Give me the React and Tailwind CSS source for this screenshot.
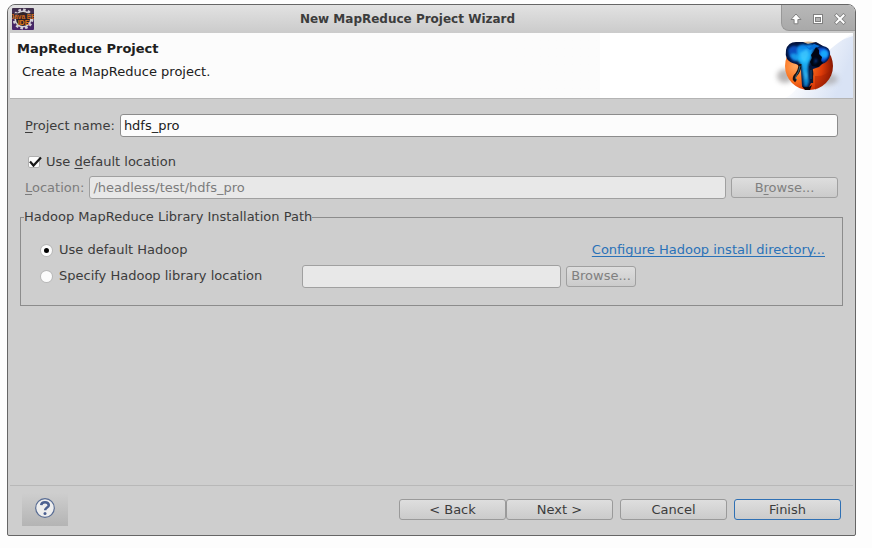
import { useState } from "react";

const buttonBase =
  "h-[21px] shrink-0 rounded-[3px] border bg-linear-to-b from-[#dedede] to-[#cbcbcb] text-center leading-[18px]";
const fieldBase = "h-[23px] min-w-0 rounded-[3px] border px-[3px] leading-5 outline-none";
const disabledField = "border-[#a0a0a0] bg-[#e8e8e8] text-[#7c7c7c]";
const disabledButton = "border-[#a0a0a0] from-[#cccccc] to-[#bcbcbc] text-[#808080]";
const radioBase =
  "size-[11px] shrink-0 appearance-none rounded-full bg-[#fcfcfc] shadow-[0_0_0_1px_#b8b8b8] checked:border-[3px] checked:border-[#fcfcfc] checked:bg-black";

function JavaEEIcon() {
  return (
    <svg className="size-[22px]" viewBox="0 0 22 22" aria-hidden="true">
      <defs>
        <linearGradient id="tile" x1="0" y1="0" x2="0" y2="1">
          <stop offset="0" stopColor="#40304c" />
          <stop offset="1" stopColor="#48246c" />
        </linearGradient>
      </defs>
      <rect width="22" height="22" rx="1" fill="url(#tile)" />
      <circle cx="11" cy="11" r="9.2" fill="none" stroke="#d4d0d8" strokeWidth="2.4" strokeDasharray="2.6 2.2" />
      <circle cx="11" cy="11" r="7.8" fill="#2a2028" stroke="#d4d0d8" strokeWidth="1.6" />
      <rect x="0" y="5" width="22" height="6" fill="#33242c" opacity="0.75" />
      <text x="11" y="10.5" textAnchor="middle" fontSize="6.5" fontWeight="bold" fill="#d06818" fontFamily="Liberation Sans, sans-serif">
        Java EE
      </text>
      <text x="11.5" y="16.5" textAnchor="middle" fontSize="7" fontWeight="bold" fill="#e07818" fontFamily="Liberation Sans, sans-serif">
        IDE
      </text>
    </svg>
  );
}

function ElephantBanner() {
  return (
    <svg className="h-[65px] w-[90px] shrink-0" viewBox="0 0 90 65" aria-hidden="true">
      <defs>
        <linearGradient id="sky" x1="0.2" y1="0" x2="1" y2="0.3">
          <stop offset="0.1" stopColor="#ffffff" />
          <stop offset="1" stopColor="#d9e3f5" />
        </linearGradient>
        <radialGradient id="globe" cx="0.22" cy="0.5" r="0.8">
          <stop offset="0" stopColor="#ffa860" />
          <stop offset="0.35" stopColor="#fb7420" />
          <stop offset="0.7" stopColor="#dc3a08" />
          <stop offset="1" stopColor="#801400" />
        </radialGradient>
        <linearGradient id="trunk" x1="0" y1="0" x2="0" y2="1">
          <stop offset="0" stopColor="#0c80e8" />
          <stop offset="0.35" stopColor="#20b8fc" />
          <stop offset="1" stopColor="#0c78c0" />
        </linearGradient>
        <filter id="soft" x="-50%" y="-50%" width="200%" height="200%">
          <feGaussianBlur stdDeviation="2.4" />
        </filter>
        <filter id="blend" x="-20%" y="-20%" width="140%" height="140%">
          <feGaussianBlur stdDeviation="0.8" />
        </filter>
      </defs>
      <path d="M90 0V65H22C40 58 43 28 90 0Z" fill="url(#sky)" />
      <path d="M56 22Q72 8 90 3V0H0V22Z" fill="#ffffff" opacity="0.7" />
      <ellipse cx="22" cy="43" rx="8" ry="7" fill="#9d9a9a" opacity="0.7" filter="url(#soft)" />
      <ellipse cx="64" cy="46" rx="11" ry="6" fill="#9d9a9a" opacity="0.6" filter="url(#soft)" />
      <circle cx="46" cy="33" r="24" fill="url(#globe)" />
      <path d="M52 57Q65 51 69 36Q62 44 52 43Z" fill="#a02004" opacity="0.4" />
      <path d="M36 10Q48 6 58 12L51 16H40Z" fill="#d8b48c" />
      <path
        d="M23 17Q25 9 33 9H40L45 11L53 9L60 13Q67 14 67 21Q66 29 59 31L56 34L50 36L48 40L48 50L45 56Q41 57 39 53L38 37Q36 32 33 31Q27 30 24 26Q22 22 23 17Z"
        fill="#031440"
      />
      <path d="M25 17Q28 12 33 13L37 17L35 26L31 28Q26 26 25 17Z" fill="#0850c0" filter="url(#blend)" />
      <path d="M27 22Q31 18 36 23L34 28Q29 27 27 22Z" fill="#1498e8" filter="url(#blend)" />
      <path d="M55 15Q63 13 66 20Q65 27 60 29L56 26Z" fill="#0858e0" filter="url(#blend)" />
      <circle cx="61" cy="21" r="4" fill="#14a8fc" filter="url(#blend)" />
      <path
        d="M34 14Q38 10 43 12Q49 10 53 13L50 18L48 26Q45 30 45 36L46 49L44 54L41 53L39 37Q39 31 34 27Z"
        fill="url(#trunk)"
        filter="url(#blend)"
      />
      <path d="M37 20L44 16L46 21L42 30L38 26Z" fill="#48d0ff" opacity="0.65" filter="url(#blend)" />
      <path d="M41 36L44 42L43 49Z" fill="#5cd8ff" opacity="0.65" filter="url(#blend)" />
      <path d="M40 11L46 15L51 11L57 13L53 15L47 17Z" fill="#0870d8" />
      <path d="M53 14L56 17L56 21L59 24L58 28L60 30L55 34L49 33L47 29L49 25L48 22L51 18Z" fill="#010512" />
      <path d="M52 25L55 28L51 31Z" fill="#0848b0" opacity="0.7" filter="url(#blend)" />
      <path d="M37 31Q37 38 32 43Q30 46 33 48" fill="none" stroke="#1c1010" strokeWidth="3" />
      <path d="M37 33Q36 39 33 43Q31 46 34 47" fill="none" stroke="#2c6880" strokeWidth="1" />
      <path d="M47 33Q50 38 49 43V50" fill="none" stroke="#0a1830" strokeWidth="2.2" />
      <path d="M48 37V46" fill="none" stroke="#205880" strokeWidth="0.8" />
      <path d="M39 53Q44 56 49 52L47 57H42Z" fill="#120404" />
    </svg>
  );
}

function WindowControls() {
  const control = "flex size-[22px] items-center justify-center";
  return (
    <div className="flex h-[26px] w-[74px] items-center self-start rounded-bl-lg border-b border-l border-[#989898] bg-linear-to-b from-[#b8b8b8] to-[#a9a9a9] pt-[2px] pl-[3px]">
      <button type="button" aria-label="Roll up" className={control}>
        <svg className="size-[12px]" viewBox="0 0 12 12">
          <path d="M6 1L11 6.5H7.9V10.8H4.1V6.5H1Z" fill="#ffffff" stroke="#808080" />
        </svg>
      </button>
      <button type="button" aria-label="Maximize" className={control}>
        <svg className="size-[12px]" viewBox="0 0 12 12">
          <rect x="1.5" y="1.5" width="9" height="9" fill="#ffffff" stroke="#808080" />
          <rect x="3.5" y="4.5" width="5" height="4" fill="#b2b2b2" stroke="#808080" />
        </svg>
      </button>
      <button type="button" aria-label="Close" className={control}>
        <svg className="size-[12px]" viewBox="0 0 12 12" strokeLinecap="square">
          <path d="M2.5 2.5L9.5 9.5M9.5 2.5L2.5 9.5" stroke="#808080" strokeWidth="3.6" />
          <path d="M2.5 2.5L9.5 9.5M9.5 2.5L2.5 9.5" stroke="#ffffff" strokeWidth="2" />
        </svg>
      </button>
    </div>
  );
}

export default function App() {
  const [name, setName] = useState("hdfs_pro");
  const [useDefault, setUseDefault] = useState(true);
  const [source, setSource] = useState("default");

  return (
    <div className="flex min-h-screen flex-col bg-[#fdfdfd] pt-1 pr-4 pb-3 pl-[7px] font-['DejaVu_Sans',sans-serif] text-[13px] text-[#3c3c3c]">
      <main className="flex flex-1 flex-col overflow-hidden rounded-t-lg rounded-b-xs border border-[#666666] bg-[#cecece]">
        <header className="flex h-7 bg-linear-to-b from-[#e2e2e2] to-[#cbcbcb]">
          <div className="flex items-center pl-1">
            <JavaEEIcon />
          </div>
          <h1 className="flex-1 text-center text-[12px] leading-7 font-bold">New MapReduce Project Wizard</h1>
          <WindowControls />
        </header>

        <section className="mx-0.5 flex h-[66px] justify-between border-b border-[#b4b4b4] bg-linear-to-r from-[#fcfcfc] from-70% to-white to-70%">
          <div className="pt-[6px] pl-[7px] text-[#202020]">
            <h2 className="leading-5 font-bold">MapReduce Project</h2>
            <p className="pt-[3px] pl-[5px] leading-5">Create a MapReduce project.</p>
          </div>
          <ElephantBanner />
        </section>

        <form id="wizard" className="flex flex-1 flex-col px-3 pt-[15px]" onSubmit={(e) => e.preventDefault()}>
          <div className="flex items-center gap-[5px] px-[5px]">
            <label htmlFor="project">
              <u className="underline-offset-2">P</u>roject name:
            </label>
            <input
              id="project"
              type="text"
              value={name}
              onChange={(e) => setName(e.target.value)}
              className={`${fieldBase} flex-1 border-[#8c8c8c] bg-[#fcfcfc] text-[#202020]`}
            />
          </div>

          <div className="mt-[15px] flex h-5 items-center gap-1 pl-2">
            <span className="relative flex size-[14px] items-center">
              <input
                id="use-default"
                type="checkbox"
                checked={useDefault}
                onChange={(e) => setUseDefault(e.target.checked)}
                className="peer size-3 appearance-none rounded-xs border border-[#b0b0b0] bg-[#fcfcfc]"
              />
              <svg className="pointer-events-none absolute inset-0 hidden size-[14px] peer-checked:block" viewBox="0 0 14 14">
                <path d="M2 6.5L5.5 10.5L13 2.5" fill="none" stroke="#181818" strokeWidth="2.2" />
              </svg>
            </span>
            <label htmlFor="use-default">
              Use <u className="underline-offset-2">d</u>efault location
            </label>
          </div>

          <div className="mt-1 flex items-center gap-[5px] px-[5px]">
            <label htmlFor="location" className="text-[#7c7c7c]">
              <u className="underline-offset-2">L</u>ocation:
            </label>
            <input
              id="location"
              type="text"
              disabled
              value="/headless/test/hdfs_pro"
              readOnly
              className={`${fieldBase} ${disabledField} flex-1`}
            />
            <button type="button" disabled className={`${buttonBase} ${disabledButton} w-[107px]`}>
              B<u className="underline-offset-2">r</u>owse...
            </button>
          </div>

          <fieldset className="mt-2 border border-[#8c8c8c] pr-[17px] pb-4 pl-[3px]">
            <legend className="leading-5">Hadoop MapReduce Library Installation Path</legend>
            <div className="mt-[10px] flex h-[26px] items-center justify-between pl-[17px]">
              <span className="flex items-center gap-[7px]">
                <input
                  id="default-hadoop"
                  type="radio"
                  name="source"
                  checked={source === "default"}
                  onChange={() => setSource("default")}
                  className={radioBase}
                />
                <label htmlFor="default-hadoop">Use default Hadoop</label>
              </span>
              <a href="#configure" className="text-[#2a72b8] underline underline-offset-2">
                Configure Hadoop install directory...
              </a>
            </div>
            <div className="flex h-[26px] items-center gap-[5px] pl-[17px]">
              <span className="flex w-[256px] items-center gap-[7px]">
                <input
                  id="custom-hadoop"
                  type="radio"
                  name="source"
                  checked={source === "custom"}
                  onChange={() => setSource("custom")}
                  className={radioBase}
                />
                <label htmlFor="custom-hadoop">Specify Hadoop library location</label>
              </span>
              <input
                type="text"
                disabled
                aria-label="Hadoop library location"
                className={`${fieldBase} ${disabledField} w-[259px]`}
              />
              <button type="button" disabled className={`${buttonBase} ${disabledButton} w-[70px]`}>
                Browse...
              </button>
            </div>
          </fieldset>
        </form>

        <footer className="mx-0.5 flex h-[50px] items-center border-t border-[#b8b8b8] px-3 pb-[2px]">
          <button
            type="button"
            aria-label="Help"
            className="flex h-[33px] w-[46px] items-center justify-center bg-linear-to-b from-[#cecece] to-[#b4b4b4]"
          >
            <svg className="mb-[3px] size-[20px]" viewBox="0 0 20 20">
              <circle cx="10" cy="10" r="9.3" fill="#eeeeee" stroke="#586c94" strokeWidth="1.2" />
              <path
                d="M6.2 7.2Q6.5 4.2 10 4.2T13.8 7.2C13.8 9.6 10.2 9.4 10.2 12.2"
                fill="none"
                stroke="#4c6090"
                strokeWidth="2.5"
              />
              <circle cx="10" cy="15.4" r="1.5" fill="#4c6090" />
            </svg>
          </button>
          <div className="ml-auto flex items-center gap-[7px]">
            <div className="flex">
              <button type="button" className={`${buttonBase} w-[107px] border-[#9a9a9a]`}>
                &lt; Back
              </button>
              <button type="button" className={`${buttonBase} w-[107px] border-[#9a9a9a]`}>
                Next &gt;
              </button>
            </div>
            <button type="button" className={`${buttonBase} w-[107px] border-[#9a9a9a]`}>
              Cancel
            </button>
            <button type="submit" form="wizard" className={`${buttonBase} w-[107px] border-[#2f70b4]`}>
              Finish
            </button>
          </div>
        </footer>
      </main>
    </div>
  );
}
